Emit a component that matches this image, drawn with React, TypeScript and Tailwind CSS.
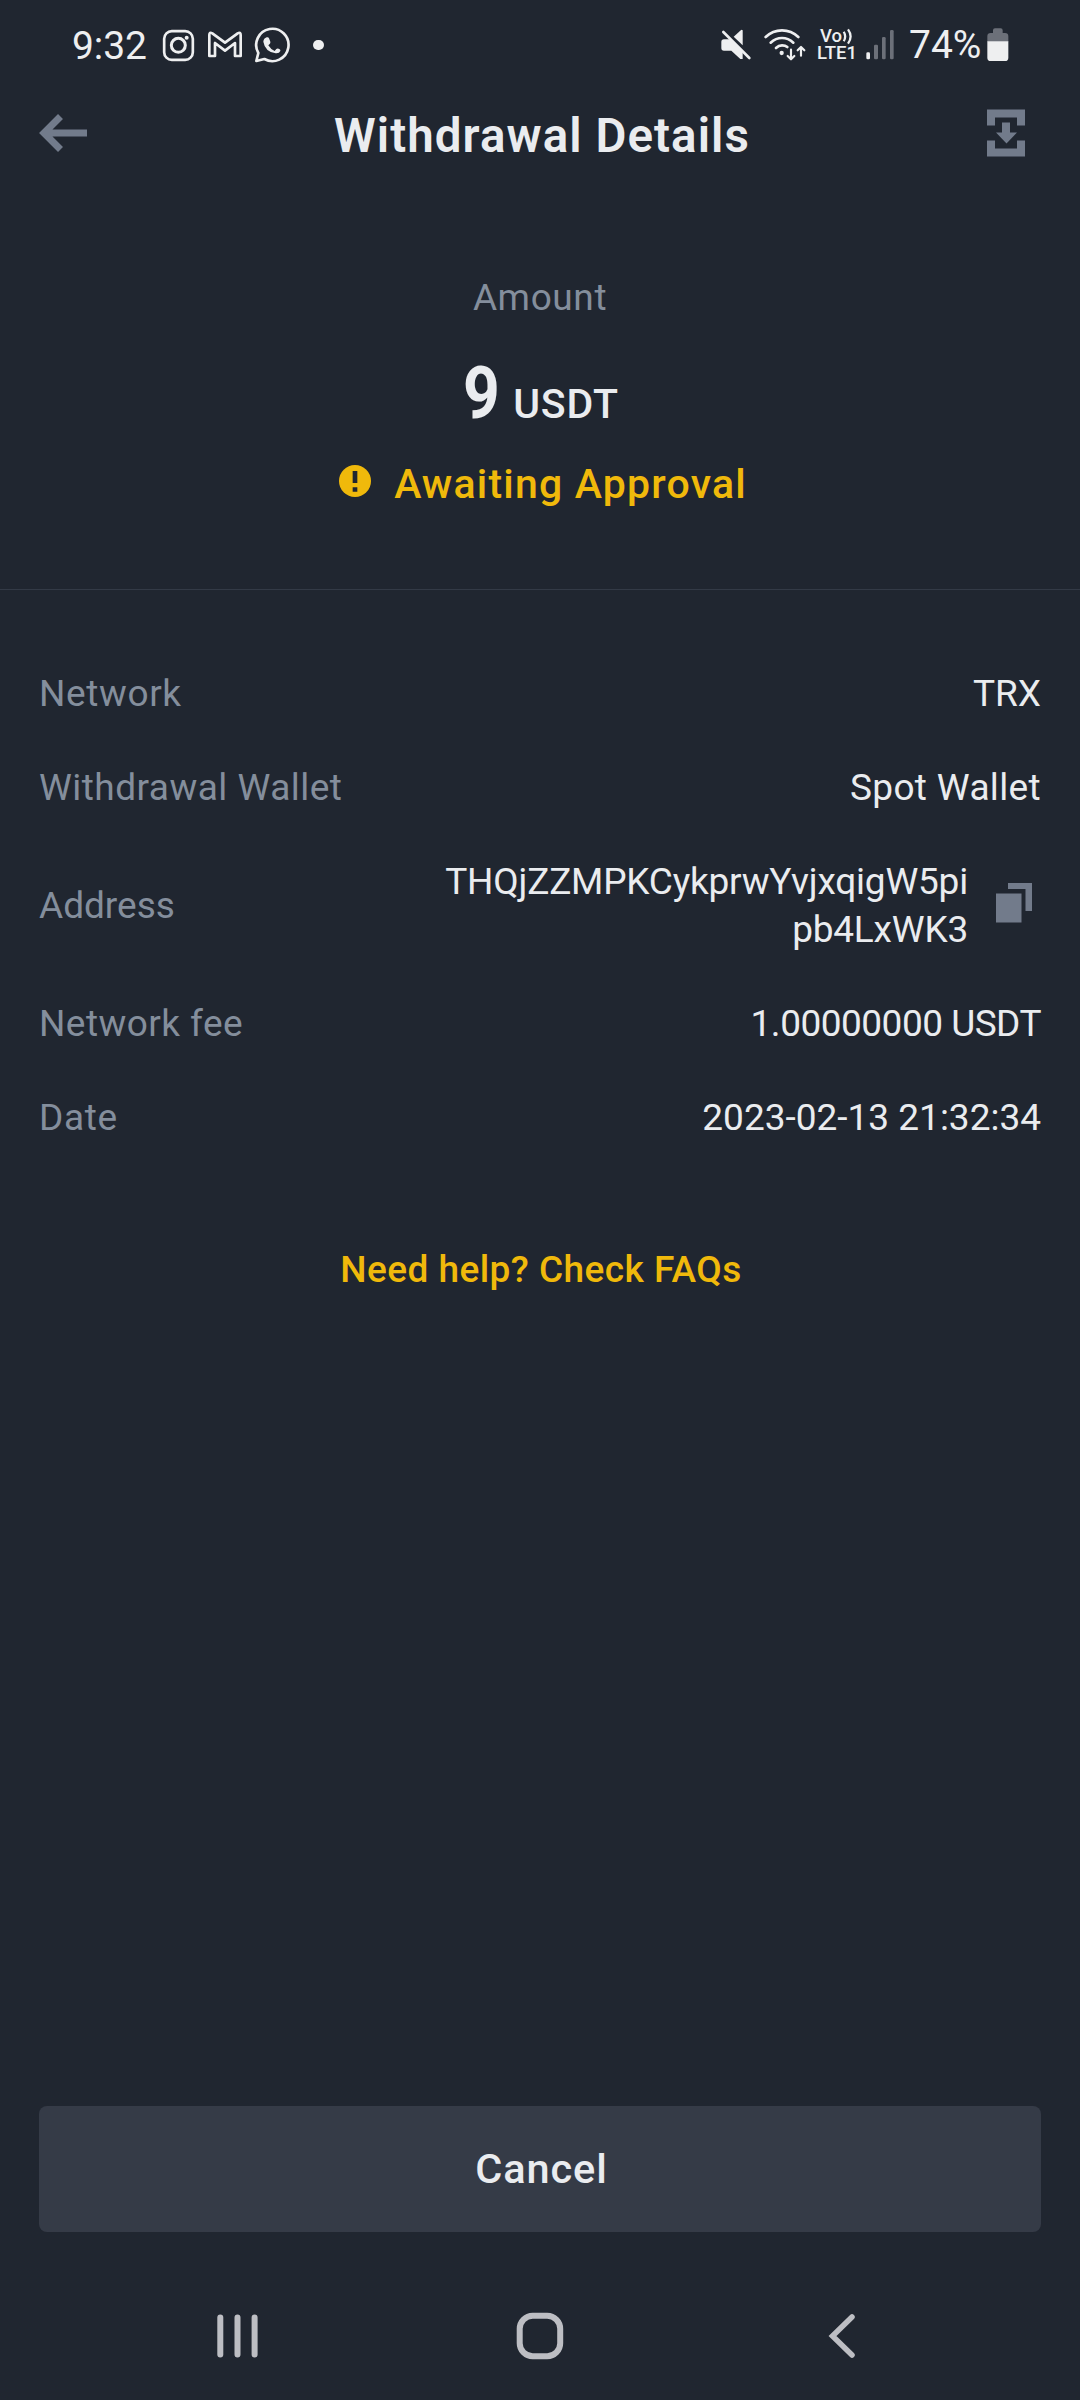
const details = [
  { label: "Network", value: "TRX", labelClass: "tracking-[0.62px]", valueClass: "tracking-normal" },
  { label: "Withdrawal Wallet", value: "Spot Wallet", labelClass: "tracking-[0.48px]", valueClass: "tracking-[0.35px]" },
  { label: "Address", value: "THQjZZMPKCykprwYvjxqigW5pipb4LxWK3", labelClass: "tracking-normal", valueClass: "tracking-[-0.2px]", copyable: true },
  { label: "Network fee", value: "1.00000000 USDT", labelClass: "tracking-[0.45px]", valueClass: "tracking-[-0.5px]" },
  { label: "Date", value: "2023-02-13 21:32:34", labelClass: "tracking-[0.7px]", valueClass: "tracking-normal" },
];

function StatusBar() {
  return (
    <div className="flex h-[90px] items-center text-[39px] leading-none text-[#eeeff0]">
      <span className="ml-[72px] w-[90px] pt-[3px] tracking-[-0.1px]">9:32</span>

      {/* Instagram */}
      <svg className="h-[33px] w-[33px]" viewBox="336 57 99 99" fill="none" stroke="currentColor">
        <rect x="342.5" y="63.5" width="86" height="86" rx="23" strokeWidth="8" />
        <circle cx="385" cy="106" r="21" strokeWidth="9" />
        <circle cx="410" cy="83" r="6" fill="currentColor" stroke="none" />
      </svg>

      {/* Gmail */}
      <svg className="ml-3 h-9 w-9" viewBox="473 52 108 108" fill="none" stroke="currentColor" strokeWidth="8" strokeLinejoin="round">
        <path d="M480 139V76Q480 66 489 71L527 99L565 71Q574 66 574 76V139H557V100L527 123L497 100V139Z" />
      </svg>

      {/* WhatsApp */}
      <svg className="ml-[11px] h-9 w-9" viewBox="613 52 108 108">
        <path
          d="M620 154L626 130A48.5 48.5 0 1 1 644 148Z"
          fill="none"
          stroke="currentColor"
          strokeWidth="8"
          strokeLinejoin="round"
        />
        <path
          d="M651 83Q656 81 658 86L662 96Q663 100 660 103L656 107Q663 119 675 124L680 118Q683 115 687 117L690 119Q693 121 692 124Q689 132 678 131Q646 126 641 96Q642 86 651 83Z"
          fill="currentColor"
        />
      </svg>
      <span className="ml-[23px] h-[10.5px] w-[10.5px] rounded-full bg-current" />

      <div className="ml-auto mr-[71px] flex items-center">
        {/* Muted speaker */}
        <svg className="h-8 w-8" viewBox="60 57 96 96">
          <path d="M72 88H91L128 125V147H121L94 122H72Q64 122 64 114V96Q64 88 72 88Z" fill="currentColor" />
          <path d="M101 80L124 59L128 61V106Z" fill="currentColor" />
          <path d="M70 66L148 144" stroke="currentColor" strokeWidth="8" strokeLinecap="round" />
        </svg>

        {/* Wi-Fi with traffic arrows */}
        <svg className="ml-3 h-8 w-[42px]" viewBox="192 57 126 96" fill="none" stroke="currentColor" strokeLinecap="round">
          <path d="M197 81Q218 61 246 61Q274 61 295 81" strokeWidth="8" />
          <path d="M212 98Q227 84 246 84Q265 84 280 98" strokeWidth="8" />
          <path d="M228 114Q236 106 246 106Q256 106 262 111" strokeWidth="8" />
          <circle cx="245" cy="129" r="6.5" fill="currentColor" stroke="none" />
          <path d="M273 119V147M263 138L273 148L283 138M303 137V112M293 121L303 111L313 121" strokeWidth="6.5" strokeLinejoin="round" />
        </svg>

        <div className="ml-[11px] flex w-[41px] flex-col text-[18.5px] font-medium leading-[17px]">
          <div className="flex h-[17px] items-center pl-[3px]">
            <span>Vo</span>
            <svg className="h-[17px] w-3" viewBox="0 0 12 18" fill="none" stroke="currentColor" strokeWidth="2.4">
              <path d="M1.5 4Q4.5 9 1.5 14M6 1.5Q11.5 9 6 16.5" />
            </svg>
          </div>
          <span>LTE1</span>
        </div>

        <svg className="ml-[8px] h-8 w-[29px]" viewBox="498 57 87 96">
          <rect x="499" y="127" width="11" height="21" rx="4" fill="currentColor" />
          <g fill="#6c7079">
            <rect x="522" y="104" width="12" height="44" rx="4" />
            <rect x="546" y="81" width="11" height="67" rx="4" />
            <rect x="570" y="60" width="11" height="88" rx="4" />
          </g>
        </svg>

        <span className="ml-[14px] w-[78px]">74%</span>

        <svg className="h-[34px] w-[22px]" viewBox="860 53 66 102">
          <path d="M878 60Q878 54 884 54H901Q907 54 907 60V68H914Q924 68 924 78V94H861V78Q861 68 871 68H878Z" fill="#6c7079" />
          <path d="M861 93H924V142Q924 152 914 152H871Q861 152 861 142Z" fill="currentColor" />
        </svg>
      </div>
    </div>
  );
}

function Header() {
  return (
    <header className="flex h-[85px] items-center justify-between pl-[38px] pr-[54px] text-[#727b8b]">
      <svg className="h-[42px] w-[52px]" viewBox="38 111.5 52 42" fill="none" stroke="currentColor" strokeWidth="7">
        <path d="M60.5 116L44 132.5L60.5 149M46 132.5H87" />
      </svg>
      <h1 className="pl-[8px] pt-[7px] text-[47.5px] font-semibold leading-[64px] tracking-[1.06px] text-[#eaecef]">
        Withdrawal Details
      </h1>
      <svg className="h-[48px] w-[40px]" viewBox="986 108.5 40 48" fill="currentColor">
        <path d="M987 109H1025V125H1017V117H995V125H987Z" />
        <path d="M987 140H995V148H1017V140H1025V156H987Z" />
        <path d="M1002 122H1010V132H1017L1006.5 143L996 132H1002Z" />
      </svg>
    </header>
  );
}

function Summary() {
  return (
    <section className="flex flex-col items-center border-b border-[#333a46] pb-[77px] pt-[99px]">
      <p className="text-[37px] leading-[48px] tracking-[0.6px] text-[#848e9c]">Amount</p>
      <div className="mt-[31px] flex h-[80px] items-baseline gap-2 pl-[2px] text-[#eaecef]">
        <span className="origin-left scale-x-[0.88] text-[73px] font-bold leading-[80px]">9</span>
        <span className="text-[41px] font-medium tracking-[0.8px]">USDT</span>
      </div>
      <div className="mt-[23px] flex items-center gap-[23px] pl-[6px] text-[#f0b90b]">
        <svg className="-mt-1.5 h-8 w-8" viewBox="57 615 96 96">
          <circle cx="105" cy="663" r="48" fill="currentColor" />
          <path d="M98 633H112V669H98ZM98 682H112V695H98Z" fill="#202630" />
        </svg>
        <span className="text-[41px] font-medium leading-[56px] tracking-[1.2px]">Awaiting Approval</span>
      </div>
    </section>
  );
}

function CopyIcon() {
  return (
    <svg className="mb-[6px] ml-[27px] mr-[8px] h-[42px] w-[38px] shrink-0" viewBox="995 882 38 42" fill="#727b8b">
      <path d="M1008 883H1032V911H1025.5V889H1008Z" />
      <path d="M996 893.5H1021.5V922.5H996Z" />
    </svg>
  );
}

function DetailList() {
  return (
    <dl className="flex flex-col gap-[46px] pl-[39px] pr-[39px] pt-20 text-[37px] leading-[48px]">
      {details.map((row) => (
        <div key={row.label} className="flex items-center justify-between">
          <dt className={`text-[#848e9c] ${row.labelClass}`}>{row.label}</dt>
          <dd className={`flex items-center text-right text-[#eaecef] ${row.valueClass}`}>
            {row.copyable ? <span className="w-[526px] break-all">{row.value}</span> : row.value}
            {row.copyable && <CopyIcon />}
          </dd>
        </div>
      ))}
    </dl>
  );
}

function NavBar() {
  return (
    <nav className="flex h-[168px] items-center justify-between pl-[214px] pr-[222px] pt-[39px] text-[#bdbec3]">
      <svg className="h-[48px] w-[47px]" viewBox="214 2311.5 47 48" stroke="currentColor" strokeWidth="6" strokeLinecap="round">
        <path d="M220.3 2317V2354M237.5 2317V2354M254.6 2317V2354" />
      </svg>
      <svg className="mr-[8px] h-[48px] w-[48px]" viewBox="515.5 2311.5 48 48" fill="none" stroke="currentColor" strokeWidth="6">
        <rect x="519.2" y="2315.3" width="40.5" height="40.5" rx="13" />
      </svg>
      <svg className="h-[48px] w-[32px]" viewBox="826 2311.5 32 48" fill="none" stroke="currentColor" strokeWidth="5.5" strokeLinecap="round">
        <path d="M852 2316.5L832.5 2335.5L852 2354.5" />
      </svg>
    </nav>
  );
}

export default function App() {
  return (
    <div className="flex h-[2400px] w-[1080px] flex-col overflow-hidden bg-[#202630] font-[Roboto,sans-serif]">
      <StatusBar />
      <Header />
      <Summary />
      <DetailList />
      <a className="mt-[104px] pl-[2px] text-center text-[37px] font-medium leading-[48px] tracking-[0.45px] text-[#f0b90b]">
        Need help? Check FAQs
      </a>
      <button className="mx-[39px] mt-auto h-[126px] rounded-lg bg-[#353b47] pl-[3px] text-[41.5px] font-medium tracking-[0.9px] text-[#eaecef]">
        Cancel
      </button>
      <NavBar />
    </div>
  );
}
